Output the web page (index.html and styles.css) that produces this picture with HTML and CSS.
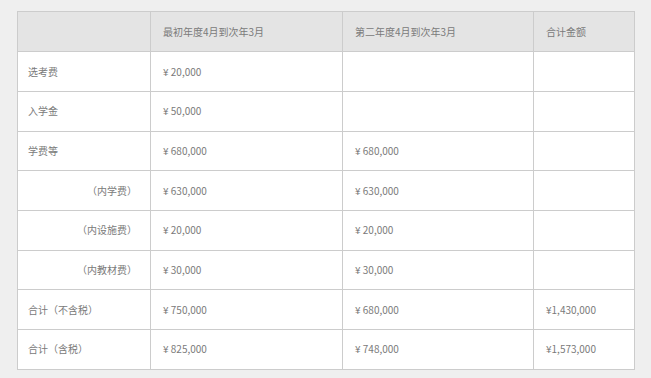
FILE: index.html
```html
<!DOCTYPE html>
<html lang="zh">
<head>
<meta charset="utf-8">
<link rel="stylesheet" href="styles.css">
</head>
<body>
<table class="fees">
  <colgroup>
    <col class="c1"><col class="c2"><col class="c3"><col class="c4">
  </colgroup>
  <thead>
    <tr><th></th><th>最初年度4月到次年3月</th><th>第二年度4月到次年3月</th><th>合计金额</th></tr>
  </thead>
  <tbody>
    <tr><td>选考费</td><td>¥ 20,000</td><td></td><td></td></tr>
    <tr><td>入学金</td><td>¥ 50,000</td><td></td><td></td></tr>
    <tr><td>学费等</td><td>¥ 680,000</td><td>¥ 680,000</td><td></td></tr>
    <tr><td class="sub">（内学费）</td><td>¥ 630,000</td><td>¥ 630,000</td><td></td></tr>
    <tr><td class="sub">（内设施费）</td><td>¥ 20,000</td><td>¥ 20,000</td><td></td></tr>
    <tr><td class="sub">（内教材费）</td><td>¥ 30,000</td><td>¥ 30,000</td><td></td></tr>
    <tr><td>合计（不含税）</td><td>¥ 750,000</td><td>¥ 680,000</td><td>¥1,430,000</td></tr>
    <tr><td>合计（含税）</td><td>¥ 825,000</td><td>¥ 748,000</td><td>¥1,573,000</td></tr>
  </tbody>
</table>
</body>
</html>
```
FILE: styles.css
```css
html, body {
  margin: 0;
  padding: 0;
  background: #efefef;
}
body {
  padding: 11px 0 0 17px;
  font-family: "Noto Sans CJK SC", "Noto Sans", sans-serif;
  font-size: 10px;
  color: #7a7a7a;
}
.fees {
  border-collapse: collapse;
  table-layout: fixed;
  width: 617px;
  background: #fff;
}
.c1 { width: 133px; }
.c2 { width: 192px; }
.c3 { width: 191px; }
.c4 { width: 101px; }
.fees th, .fees td {
  border: 1px solid #cccccc;
  height: 38.7px;
  padding: 0 0 0 12px;
  text-align: left;
  font-weight: normal;
  vertical-align: middle;
  white-space: nowrap;
  line-height: 14px;
}
.fees th {
  background: #e4e4e4;
  height: 39.3px;
}
.fees td:first-child {
  padding-left: 10px;
}
.fees td.sub {
  text-align: right;
  padding-right: 13px;
}
```
